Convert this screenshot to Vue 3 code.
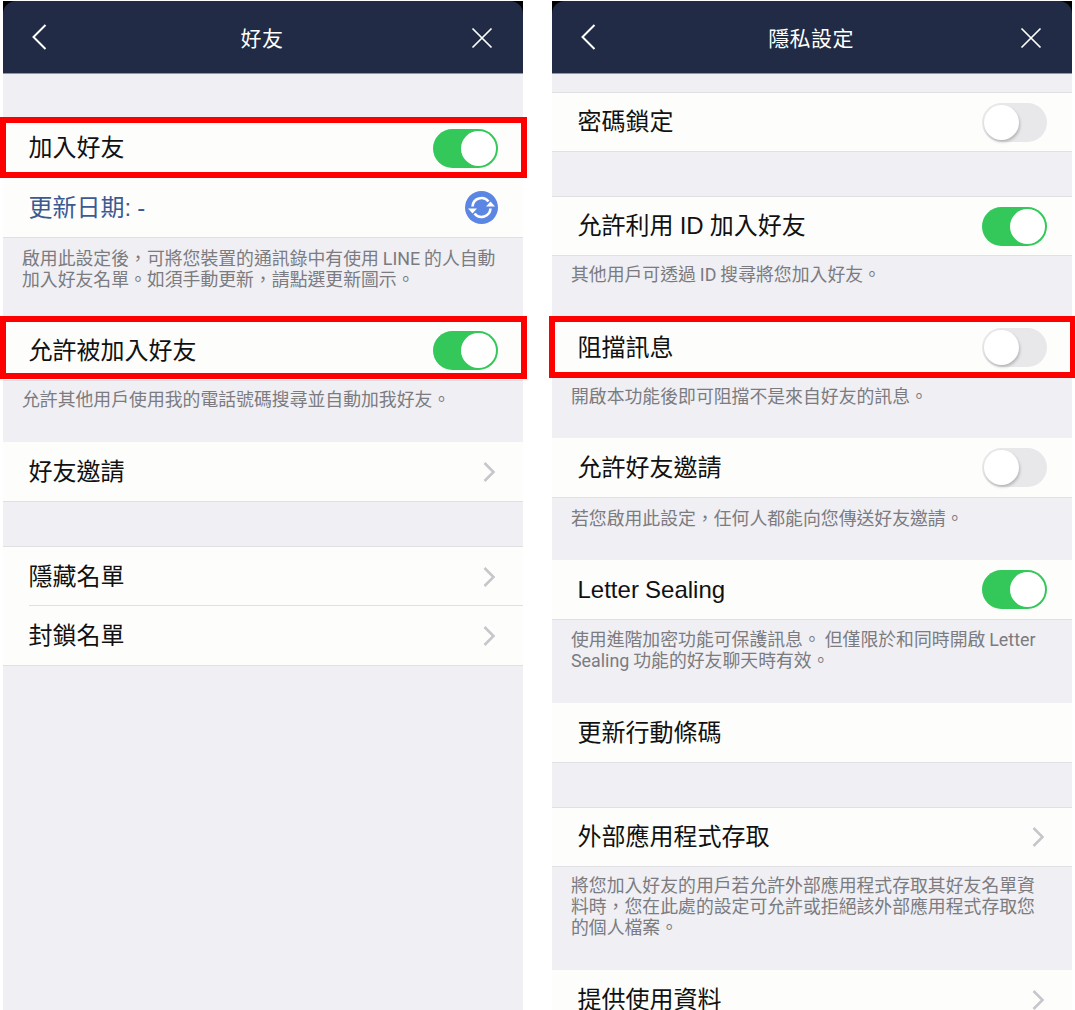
<script setup>
const panels = [
  {
    title: '好友',
    items: [
      { label: '加入好友', kind: 'on', first: 44, boxed: true },
      { label: '更新日期: -', kind: 'refresh', blue: true },
      { note: '啟用此設定後，可將您裝置的通訊錄中有使用 LINE 的人自動\n加入好友名單。如須手動更新，請點選更新圖示。', top: 10, bottom: 31 },
      { label: '允許被加入好友', kind: 'on', boxed: true, up: true },
      { note: '允許其他用戶使用我的電話號碼搜尋並自動加我好友。', top: 8, bottom: 32 },
      { label: '好友邀請', kind: 'chevron' },
      { label: '隱藏名單', kind: 'chevron', first: 44, inset: true },
      { label: '封鎖名單', kind: 'chevron' }
    ]
  },
  {
    title: '隱私設定',
    items: [
      { label: '密碼鎖定', kind: 'off', first: 18 },
      { label: '允許利用 ID 加入好友', kind: 'on', first: 44 },
      { note: '其他用戶可透過 ID 搜尋將您加入好友。', top: 8, bottom: 33 },
      { label: '阻擋訊息', kind: 'off', boxed: true },
      { note: '開啟本功能後即可阻擋不是來自好友的訊息。', top: 8, bottom: 31 },
      { label: '允許好友邀請', kind: 'off' },
      { note: '若您啟用此設定，任何人都能向您傳送好友邀請。', top: 10, bottom: 31 },
      { label: 'Letter Sealing', kind: 'on' },
      { note: '使用進階加密功能可保護訊息。 但僅限於和同時開啟 Letter\nSealing 功能的好友聊天時有效。', top: 9, bottom: 32 },
      { label: '更新行動條碼', kind: 'none' },
      { label: '外部應用程式存取', kind: 'chevron', first: 44 },
      { note: '將您加入好友的用戶若允許外部應用程式存取其好友名單資\n料時，您在此處的設定可允許或拒絕該外部應用程式存取您\n的個人檔案。', top: 8, bottom: 32 },
      { label: '提供使用資料', kind: 'chevron' }
    ]
  }
]
</script>

<template>
  <div class="page">
    <section v-for="panel in panels" :key="panel.title" class="panel">
      <header class="bar">
        <svg class="bar-back" width="20" height="28" viewBox="0 0 20 28" fill="none" stroke="#fff" stroke-width="2">
          <path d="M15.5 2 L3.5 14 L15.5 26" />
        </svg>
        <h1 class="bar-title">{{ panel.title }}</h1>
        <svg class="bar-close" width="24" height="24" viewBox="0 0 24 24" fill="none" stroke="#fff" stroke-width="1.7">
          <path d="M2.5 2.5 L21.5 21.5 M21.5 2.5 L2.5 21.5" />
        </svg>
      </header>
      <div class="content">
        <template v-for="(item, i) in panel.items" :key="i">
          <p v-if="item.note" class="note" :style="{ paddingTop: item.top + 'px', paddingBottom: item.bottom + 'px' }">{{ item.note }}</p>
          <div v-else class="row" :class="{ boxed: item.boxed, 'box-up': item.up, 'has-top': item.first, inset: item.inset, blue: item.blue, 'gap-44': item.first === 44, 'gap-18': item.first === 18 }">
            <span class="label">{{ item.label }}</span>
            <span v-if="item.kind === 'on'" class="toggle on"><i class="knob"></i></span>
            <span v-else-if="item.kind === 'off'" class="toggle"><i class="knob"></i></span>
            <svg v-else-if="item.kind === 'chevron'" class="chevron" width="14" height="22" viewBox="0 0 14 22" fill="none" stroke="#c6c6cb" stroke-width="2.6">
              <path d="M2.5 2 L11.5 11 L2.5 20" />
            </svg>
            <svg v-else-if="item.kind === 'refresh'" width="33" height="33" viewBox="0 0 33 33">
              <circle cx="16.5" cy="16.5" r="16.5" fill="#5b86e3" />
              <g fill="none" stroke="#fff" stroke-width="2.6">
                <path d="M7.5 15.5 A9 9 0 0 1 23.5 10.5" />
                <path d="M25.5 17.5 A9 9 0 0 1 9.5 22.5" />
              </g>
              <path d="M21 15.5 L30 15.5 L25.5 10.5 Z" fill="#fff" />
              <path d="M3 17.5 L12 17.5 L7.5 22.5 Z" fill="#fff" />
            </svg>
          </div>
        </template>
      </div>
    </section>
  </div>
</template>

<style>
html, body { margin: 0; background: #fff; }
</style>

<style scoped>
.page {
  display: flex;
  gap: 29px;
  height: 1010px;
  padding-left: 3px;
  overflow: hidden;
  box-sizing: border-box;
  font-family: "Liberation Sans", "Noto Sans CJK TC", sans-serif;
}
.panel {
  width: 520px;
  height: 1009px;
  margin-top: 1px;
  background: #000;
  display: flex;
  flex-direction: column;
  flex: none;
}
.bar {
  height: 73px;
  flex: none;
  box-sizing: border-box;
  background: #212b46;
  border-radius: 13px 13px 0 0;
  border-bottom: 1px solid #8f95a5;
  display: grid;
  grid-template-columns: 1fr auto 1fr;
  align-items: center;
  padding: 0 29px 1px 27px;
}
.bar-back { justify-self: start; }
.bar-close { justify-self: end; margin-top: 2px; }
.bar-title {
  margin: 0;
  color: #fff;
  font-size: 21px;
  font-weight: 400;
  letter-spacing: 0.4px;
}
.content {
  flex: 1;
  min-height: 0;
  background: #efeff4;
}
.row {
  position: relative;
  height: 60px;
  box-sizing: border-box;
  background: #fdfefc;
  border-bottom: 1px solid #e0e0e4;
  display: flex;
  align-items: center;
  justify-content: space-between;
  padding: 0 25px 0 25.5px;
  color: #111;
}
.has-top { border-top: 1px solid #e0e0e4; }
.gap-44 { margin-top: 44px; }
.gap-18 { margin-top: 18px; }
.inset { border-bottom: 0; }
.inset::after {
  content: "";
  position: absolute;
  left: 26px;
  right: 0;
  bottom: 0;
  height: 1px;
  background: #e0e0e4;
}
.blue { color: #3c5a92; }
.label {
  font-size: 24px;
  line-height: 30px;
  white-space: nowrap;
  word-spacing: -0.5px;
}
.boxed { z-index: 1; }
.boxed::before {
  content: "";
  position: absolute;
  left: -3px;
  right: -4px;
  top: -2px;
  bottom: -1px;
  border: 6px solid #fe0000;
  pointer-events: none;
}
.box-up::before {
  top: -5px;
  bottom: 1px;
}
.toggle {
  position: relative;
  width: 65px;
  height: 39px;
  border-radius: 20px;
  background: #e8e8ea;
  flex: none;
}
.toggle.on { background: #34c759; }
.knob {
  position: absolute;
  top: 2px;
  left: 2px;
  width: 35px;
  height: 35px;
  border-radius: 50%;
  background: #fff;
  box-shadow: 1px 2px 3px rgba(0, 0, 0, 0.22);
}
.on .knob {
  left: auto;
  right: 2px;
  box-shadow: none;
}
.chevron {
  margin-right: 2px;
}
.note {
  margin: 0;
  padding-left: 19px;
  padding-right: 10px;
  font-family: "Roboto", "Noto Sans CJK TC", sans-serif;
  font-size: 17.85px;
  line-height: 21px;
  color: #7b7b80;
  white-space: pre-line;
  word-spacing: -0.5px;
}
</style>
